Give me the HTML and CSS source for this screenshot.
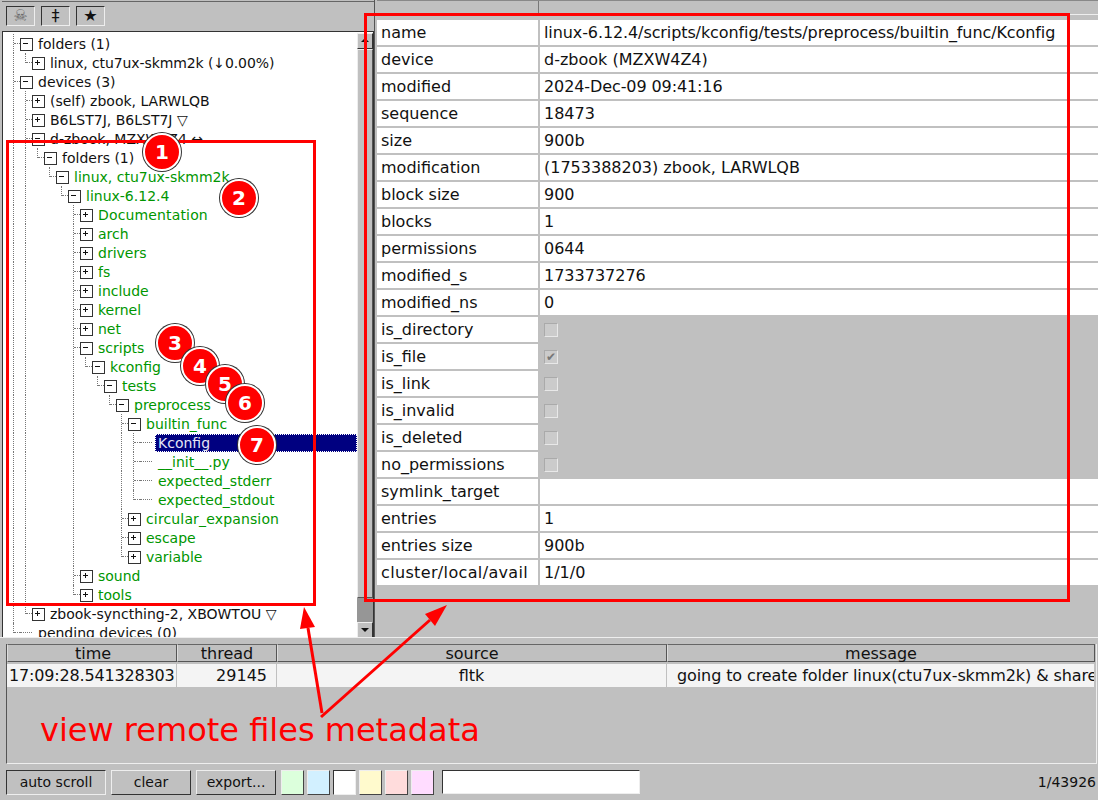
FILE: index.html
```html
<!DOCTYPE html>
<html>
<head>
  <title>syncspirit</title>
  <link rel="stylesheet" href="styles.css">
</head>
<body>
  <div class="top">
    <div class="left">
      <div class="toolbar">
        <span class="tool dim">☠</span>
        <span class="tool">‡</span>
        <span class="tool">★</span>
      </div>
      <div class="tree-box">
        <div class="tree">
          <div class="row"><i class="t"></i><b class="box minus"></b><span>folders (1)</span></div>
          <div class="row"><i class="v"></i><i class="e"></i><b class="box plus"></b><span class="tight">linux, ctu7ux-skmm2k (↓0.00%)</span></div>
          <div class="row"><i class="t"></i><b class="box minus"></b><span>devices (3)</span></div>
          <div class="row"><i class="v"></i><i class="t"></i><b class="box plus"></b><span>(self) zbook, LARWLQB</span></div>
          <div class="row"><i class="v"></i><i class="t"></i><b class="box plus"></b><span>B6LST7J, B6LST7J ▽</span></div>
          <div class="row"><i class="v"></i><i class="t"></i><b class="box minus"></b><span>d-zbook, MZXW4Z4 ↔</span></div>
          <div class="row"><i class="v"></i><i class="v"></i><i class="e"></i><b class="box minus"></b><span>folders (1)</span></div>
          <div class="row green"><i class="v"></i><i class="v"></i><i></i><i class="e"></i><b class="box minus"></b><span>linux, ctu7ux-skmm2k</span></div>
          <div class="row green"><i class="v"></i><i class="v"></i><i></i><i></i><i class="e"></i><b class="box minus"></b><span>linux-6.12.4</span></div>
          <div class="row green"><i class="v"></i><i class="v"></i><i></i><i></i><i></i><i class="t"></i><b class="box plus"></b><span class="wide">Documentation</span></div>
          <div class="row green"><i class="v"></i><i class="v"></i><i></i><i></i><i></i><i class="t"></i><b class="box plus"></b><span>arch</span></div>
          <div class="row green"><i class="v"></i><i class="v"></i><i></i><i></i><i></i><i class="t"></i><b class="box plus"></b><span>drivers</span></div>
          <div class="row green"><i class="v"></i><i class="v"></i><i></i><i></i><i></i><i class="t"></i><b class="box plus"></b><span>fs</span></div>
          <div class="row green"><i class="v"></i><i class="v"></i><i></i><i></i><i></i><i class="t"></i><b class="box plus"></b><span>include</span></div>
          <div class="row green"><i class="v"></i><i class="v"></i><i></i><i></i><i></i><i class="t"></i><b class="box plus"></b><span>kernel</span></div>
          <div class="row green"><i class="v"></i><i class="v"></i><i></i><i></i><i></i><i class="t"></i><b class="box plus"></b><span>net</span></div>
          <div class="row green"><i class="v"></i><i class="v"></i><i></i><i></i><i></i><i class="t"></i><b class="box minus"></b><span>scripts</span></div>
          <div class="row green"><i class="v"></i><i class="v"></i><i></i><i></i><i></i><i class="v"></i><i class="e"></i><b class="box minus"></b><span>kconfig</span></div>
          <div class="row green"><i class="v"></i><i class="v"></i><i></i><i></i><i></i><i class="v"></i><i></i><i class="e"></i><b class="box minus"></b><span>tests</span></div>
          <div class="row green"><i class="v"></i><i class="v"></i><i></i><i></i><i></i><i class="v"></i><i></i><i></i><i class="e"></i><b class="box minus"></b><span>preprocess</span></div>
          <div class="row green"><i class="v"></i><i class="v"></i><i></i><i></i><i></i><i class="v"></i><i></i><i></i><i></i><i class="t"></i><b class="box minus"></b><span>builtin_func</span></div>
          <div class="row green"><i class="v"></i><i class="v"></i><i></i><i></i><i></i><i class="v"></i><i></i><i></i><i></i><i class="v"></i><i class="t"></i><i class="dash"></i><span class="selected">Kconfig</span></div>
          <div class="row green"><i class="v"></i><i class="v"></i><i></i><i></i><i></i><i class="v"></i><i></i><i></i><i></i><i class="v"></i><i class="t"></i><i class="dash"></i><span>__init__.py</span></div>
          <div class="row green"><i class="v"></i><i class="v"></i><i></i><i></i><i></i><i class="v"></i><i></i><i></i><i></i><i class="v"></i><i class="t"></i><i class="dash"></i><span>expected_stderr</span></div>
          <div class="row green"><i class="v"></i><i class="v"></i><i></i><i></i><i></i><i class="v"></i><i></i><i></i><i></i><i class="v"></i><i class="e"></i><i class="dash"></i><span>expected_stdout</span></div>
          <div class="row green"><i class="v"></i><i class="v"></i><i></i><i></i><i></i><i class="v"></i><i></i><i></i><i></i><i class="t"></i><b class="box plus"></b><span class="wide">circular_expansion</span></div>
          <div class="row green"><i class="v"></i><i class="v"></i><i></i><i></i><i></i><i class="v"></i><i></i><i></i><i></i><i class="t"></i><b class="box plus"></b><span>escape</span></div>
          <div class="row green"><i class="v"></i><i class="v"></i><i></i><i></i><i></i><i class="v"></i><i></i><i></i><i></i><i class="e"></i><b class="box plus"></b><span>variable</span></div>
          <div class="row green"><i class="v"></i><i class="v"></i><i></i><i></i><i></i><i class="t"></i><b class="box plus"></b><span>sound</span></div>
          <div class="row green"><i class="v"></i><i class="v"></i><i></i><i></i><i></i><i class="e"></i><b class="box plus"></b><span>tools</span></div>
          <div class="row"><i class="v"></i><i class="e"></i><b class="box plus"></b><span>zbook-syncthing-2, XBOWTOU ▽</span></div>
          <div class="row"><i class="e"></i><i class="dash"></i><span>pending devices (0)</span></div>
        </div>
        <div class="scrollbar">
          <div class="arrow up"></div>
          <div class="thumb"></div>
          <div class="track"></div>
          <div class="arrow down"></div>
        </div>
      </div>
    </div>

    <div class="right">
      <div class="meta-head"><div class="head-name"></div><div class="head-value"></div></div>
      <div class="meta">
        <div class="k">name</div><div class="val tight">linux-6.12.4/scripts/kconfig/tests/preprocess/builtin_func/Kconfig</div>
        <div class="k">device</div><div class="val">d-zbook (MZXW4Z4)</div>
        <div class="k">modified</div><div class="val tight">2024-Dec-09 09:41:16</div>
        <div class="k">sequence</div><div class="val">18473</div>
        <div class="k">size</div><div class="val">900b</div>
        <div class="k">modification</div><div class="val">(1753388203) zbook, LARWLQB</div>
        <div class="k">block size</div><div class="val">900</div>
        <div class="k">blocks</div><div class="val">1</div>
        <div class="k">permissions</div><div class="val">0644</div>
        <div class="k">modified_s</div><div class="val">1733737276</div>
        <div class="k">modified_ns</div><div class="val">0</div>
        <div class="k">is_directory</div><div class="flag"><span class="check"></span></div>
        <div class="k">is_file</div><div class="flag"><span class="check">✔</span></div>
        <div class="k">is_link</div><div class="flag"><span class="check"></span></div>
        <div class="k">is_invalid</div><div class="flag"><span class="check"></span></div>
        <div class="k">is_deleted</div><div class="flag"><span class="check"></span></div>
        <div class="k">no_permissions</div><div class="flag"><span class="check"></span></div>
        <div class="k">symlink_target</div><div class="val"></div>
        <div class="k">entries</div><div class="val">1</div>
        <div class="k">entries size</div><div class="val">900b</div>
        <div class="k wide-label">cluster/local/avail</div><div class="val">1/1/0</div>
      </div>
    </div>
  </div>

  <div class="log">
    <div class="log-table">
      <div class="log-head">
        <div class="c-time">time</div>
        <div class="c-thread">thread</div>
        <div class="c-source">source</div>
        <div class="c-message">message</div>
      </div>
      <div class="log-row">
        <div class="c-time tight">17:09:28.541328303</div>
        <div class="c-thread num">29145</div>
        <div class="c-source">fltk</div>
        <div class="c-message msg tight">going to create folder linux(ctu7ux-skmm2k) &amp; share it with device d-zbook</div>
      </div>
    </div>
  </div>

  <div class="bottom">
    <span class="btn down">auto scroll</span>
    <span class="btn clear">clear</span>
    <span class="btn export">export...</span>
    <div class="swatches">
      <span class="sw sw-green"></span>
      <span class="sw sw-blue"></span>
      <span class="sw sw-white"></span>
      <span class="sw sw-yellow"></span>
      <span class="sw sw-red"></span>
      <span class="sw sw-pink"></span>
    </div>
    <div class="filter"></div>
    <div class="count">1/43926</div>
  </div>

  <!-- annotations drawn on top of the screenshot -->
  <div class="mark mark-tree"></div>
  <div class="mark mark-meta"></div>
  <svg class="arrows" width="1098" height="800" viewBox="0 0 1098 800">
    <g fill="none" stroke="#f00" stroke-width="3">
      <path d="M322 713 L308 628"/>
      <path d="M321 717 L430 620"/>
    </g>
    <g fill="#f00">
      <path d="M304 607 L315 627 L300 629 Z"/>
      <path d="M447 605 L435 626 L425 614 Z"/>
    </g>
  </svg>
  <div class="pin p1">1</div>
  <div class="pin p2">2</div>
  <div class="pin p3">3</div>
  <div class="pin p4">4</div>
  <div class="pin p5">5</div>
  <div class="pin p6">6</div>
  <div class="pin p7">7</div>
  <div class="caption">view remote files metadata</div>
</body>
</html>
```

FILE: styles.css
```css
* {
  box-sizing: border-box;
}

body {
  margin: 0;
  width: 1098px;
  height: 800px;
  overflow: hidden;
  position: relative;
  background: #c0c0c0;
  color: #111;
  font-family: "DejaVu Sans", sans-serif;
  font-size: 14px;
}

.top {
  display: flex;
  height: 638px;
  border-bottom: 1px solid #eee;
}

.left {
  width: 375px;
  padding: 1px 0 0 2px;
  border-right: 1px solid #555;
}

.toolbar {
  display: flex;
  gap: 6px;
  height: 30px;
  padding: 4px 0 0 4px;
  border-top: 1px solid #666;
}

.tool {
  width: 29px;
  height: 20px;
  line-height: 17px;
  text-align: center;
  font-size: 16px;
  border: 1px solid;
  border-color: #333 #eee #eee #333;
}

.tool.dim {
  color: #666;
}

.tree-box {
  display: flex;
  height: 606px;
  background: #fff;
  border: 1px solid #333;
  border-bottom: none;
  overflow: hidden;
}

.tree {
  flex: none;
  width: 354px;
  padding: 2px 0 0 5px;
}

.row {
  display: flex;
  align-items: center;
  height: 19px;
  white-space: nowrap;
}

.row span {
  margin-left: 6px;
}

.green {
  color: #009600;
}

/* glyph widths in the original are a bit off from ours */
.wide {
  letter-spacing: 0.15px;
}

.wide-label {
  letter-spacing: 0.35px;
}

.tight {
  letter-spacing: -0.1px;
}

.row i {
  flex: none;
  width: 12px;
  height: 19px;
  position: relative;
}

.row i.v::before,
.row i.t::before,
.row i.e::before {
  content: "";
  position: absolute;
  left: 5px;
  top: 0;
  height: 100%;
  border-left: 1px dotted #777;
}

.row i.e::before {
  height: 10px;
}

.row i.t::after,
.row i.e::after,
.row i.dash::after {
  content: "";
  position: absolute;
  left: 6px;
  right: 0;
  top: 9px;
  border-top: 1px dotted #777;
}

.row i.dash::after {
  left: 0;
}

.box {
  flex: none;
  width: 12px;
  height: 11px;
  position: relative;
}

.box::before {
  content: "";
  position: absolute;
  left: 0;
  top: 0;
  width: 11px;
  height: 11px;
  border: 1px solid #333;
}

.box::after {
  content: "";
  position: absolute;
  left: 3px;
  top: 5px;
  width: 5px;
  height: 1px;
  background: #111;
}

.plus {
  background: linear-gradient(#111, #111) 5px 3px / 1px 5px no-repeat;
}

.row .selected {
  flex: 1;
  margin-left: 3px;
  height: 18px;
  line-height: 16px;
  padding-left: 2px;
  color: #e6e6f5;
  background: #000080;
  border: 1px dotted #fff;
}

.scrollbar {
  flex: none;
  display: flex;
  flex-direction: column;
  width: 16px;
  height: 100%;
  margin-top: 1px;
  background: #c0c0c0;
}

.arrow {
  flex: none;
  height: 16px;
  position: relative;
  background: #c0c0c0;
  border: 1px solid;
  border-color: #eee #333 #333 #eee;
}

.arrow::after {
  content: "";
  position: absolute;
  left: 3px;
  border-left: 4px solid transparent;
  border-right: 4px solid transparent;
}

.arrow.up::after {
  top: 4px;
  border-bottom: 4px solid #111;
}

.arrow.down::after {
  top: 5px;
  border-top: 4px solid #111;
}

.thumb {
  flex: none;
  height: 549px;
  background: #c0c0c0;
  border: 1px solid;
  border-color: #eee #555 #555 #eee;
}

.track {
  flex: 1;
  background: #969696;
}

.right {
  flex: 1;
  padding-left: 2px;
  overflow: hidden;
}

.meta-head {
  display: flex;
  height: 15px;
  border-top: 1px solid #888;
  border-bottom: 1px solid #eee;
}

.head-name {
  width: 162px;
  border-right: 1px solid #777;
}

.meta {
  display: grid;
  grid-template-columns: 161px 558px;
  grid-auto-rows: 25px;
  gap: 2px;
  margin-top: 5px;
  font-size: 16px;
}

.k,
.val {
  background: #fff;
  line-height: 25px;
  white-space: nowrap;
}

.k {
  padding-left: 4px;
}

.val {
  padding-left: 4px;
}

.flag {
  display: flex;
  align-items: center;
  padding-left: 4px;
}

.check {
  width: 14px;
  height: 14px;
  line-height: 12px;
  text-align: center;
  font-size: 12px;
  color: #777;
  background: #cbcbcb;
  border: 1px solid;
  border-color: #aaa #e8e8e8 #e8e8e8 #aaa;
}

.log {
  height: 126px;
  padding: 6px 1px 0 6px;
  font-size: 16px;
}

.log-table {
  height: 120px;
  border-left: 1px solid #555;
  border-right: 1px solid #eee;
  border-bottom: 1px solid #eee;
}

.log-head,
.log-row {
  display: flex;
  white-space: nowrap;
}

.log-head > div {
  height: 18px;
  line-height: 17px;
  text-align: center;
  border: 1px solid;
  border-color: #666 #555 #555 #ddd;
}

.log-row {
  height: 23px;
  margin-top: 2px;
  line-height: 23px;
}

.log-row > div {
  background: #f4f4f4;
  border-right: 1px solid #c0c0c0;
  overflow: hidden;
}

.c-time {
  flex: none;
  width: 170px;
  padding-left: 2px;
}

.log-row .c-time {
  letter-spacing: -0.17px;
}

.c-thread {
  flex: none;
  width: 100px;
}

.c-source {
  flex: none;
  width: 390px;
  text-align: center;
}

.c-message {
  flex: none;
  width: 428px;
}

.log-row .num {
  text-align: right;
  padding-right: 9px;
}

.log-row .msg {
  padding-left: 10px;
}

.bottom {
  display: flex;
  align-items: center;
  height: 26px;
  margin-top: 5px;
  padding: 0 2px 0 6px;
}

.btn {
  width: 80px;
  height: 25px;
  line-height: 23px;
  text-align: center;
  margin-right: 5px;
  border: 1px solid;
  border-color: #eee #333 #333 #eee;
}

.btn.down {
  width: 100px;
  border-color: #333 #eee #eee #333;
}

.swatches {
  display: flex;
  gap: 3px;
}

.sw {
  width: 23px;
  height: 25px;
  border: 1px solid;
  border-color: #eee #444 #444 #eee;
}

.sw-green { background: #dcffdc; }
.sw-blue { background: #d2f0ff; }
.sw-yellow { background: #fffacd; }
.sw-red { background: #ffdcdc; }
.sw-pink { background: #ffdcff; }

.sw-white {
  background: #fff;
  border-color: #333 #eee #eee #333;
}

.filter {
  width: 198px;
  height: 24px;
  margin-left: 8px;
  background: #fff;
  border: 1px solid;
  border-color: #333 #eee #eee #333;
}

.count {
  margin-left: auto;
}

.mark {
  position: absolute;
  border: 3px solid #f00;
}

.mark-tree {
  left: 6px;
  top: 140px;
  width: 310px;
  height: 466px;
}

.mark-meta {
  left: 364px;
  top: 13px;
  width: 706px;
  height: 589px;
}

.arrows {
  position: absolute;
  left: 0;
  top: 0;
}

.pin {
  position: absolute;
  width: 38px;
  height: 38px;
  line-height: 34px;
  text-align: center;
  color: #fff;
  font-size: 20px;
  font-weight: bold;
  background: #f00;
  border: 2px solid #fff;
  border-radius: 50%;
  box-shadow: 0 0 0 1px #333;
}

.p1 { left: 143px; top: 133px; }
.p2 { left: 220px; top: 179px; }
.p3 { left: 156px; top: 324px; }
.p4 { left: 181px; top: 347px; }
.p5 { left: 206px; top: 365px; }
.p6 { left: 226px; top: 384px; }
.p7 { left: 238px; top: 426px; }

.caption {
  position: absolute;
  left: 40px;
  top: 710px;
  color: #f00;
  font-size: 32px;
  line-height: 40px;
  white-space: nowrap;
}
```
